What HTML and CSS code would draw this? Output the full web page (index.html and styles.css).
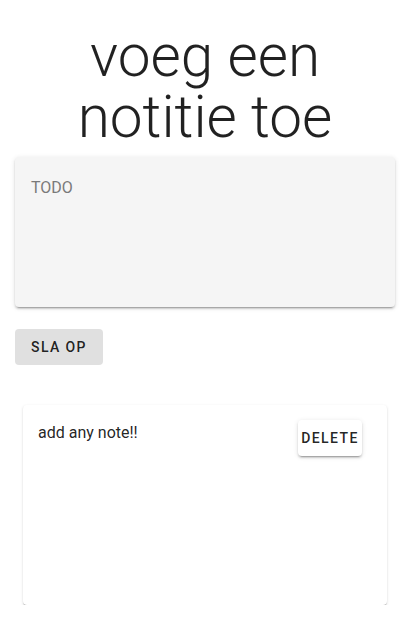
FILE: index.html
```html
<!DOCTYPE html>
<html lang="nl">
<head>
<meta charset="utf-8">
<title>voeg een notitie toe</title>
<link rel="stylesheet" href="styles.css">
</head>
<body>
<main class="page">
  <h1 class="title">voeg een notitie toe</h1>
  <div class="paper input-paper">
    <textarea class="todo-input" placeholder="TODO"></textarea>
  </div>
  <button class="btn btn-save" type="button">Sla op</button>
  <section class="notes">
    <article class="note-card">
      <p class="note-text">add any note!!</p>
      <button class="btn btn-delete" type="button">Delete</button>
    </article>
  </section>
</main>
</body>
</html>
```

FILE: styles.css
```css
* { box-sizing: border-box; }

html, body {
  margin: 0;
  padding: 0;
  background: #ffffff;
}

body {
  font-family: Roboto, "Liberation Sans", sans-serif;
  color: rgba(0, 0, 0, 0.87);
}

.page {
  padding: 26px 16px 0 15px;
  display: flex;
  flex-direction: column;
}

.title {
  margin: 0 auto;
  max-width: 270px;
  font-size: 58.5px;
  font-weight: 300;
  line-height: 61px;
  text-align: center;
  color: rgba(0, 0, 0, 0.87);
}

.paper {
  border-radius: 4px;
  box-shadow: 0px 3px 1px -2px rgba(0,0,0,0.2), 0px 2px 2px 0px rgba(0,0,0,0.14), 0px 1px 5px 0px rgba(0,0,0,0.12);
}

.input-paper {
  margin-top: 9px;
  height: 150px;
  background: #f5f5f5;
  display: flex;
}

.todo-input {
  flex: 1;
  border: none;
  outline: none;
  resize: none;
  background: transparent;
  padding: 21px 16px;
  font-family: Roboto, "Liberation Sans", sans-serif;
  font-size: 16px;
  line-height: 19px;
  color: rgba(0, 0, 0, 0.87);
}

.todo-input::placeholder {
  color: #7a7a7a;
  opacity: 1;
}

.btn {
  font-family: Roboto, "Liberation Sans", sans-serif;
  font-size: 14px;
  font-weight: 500;
  letter-spacing: 0.1em;
  text-transform: uppercase;
  color: rgba(0, 0, 0, 0.87);
  border: none;
  border-radius: 4px;
  height: 36px;
  min-width: 64px;
  cursor: pointer;
  display: inline-flex;
  align-items: center;
  justify-content: center;
}

.btn-save {
  align-self: flex-start;
  margin-top: 22px;
  width: 88px;
  padding: 0 16px;
  background: #e0e0e0;
}

.notes {
  margin-top: 40px;
  padding: 0 8px;
}

.note-card {
  height: 200px;
  background: #ffffff;
  border-radius: 4px;
  box-shadow: 0px 2px 1px -1px rgba(0,0,0,0.2), 0px 1px 1px 0px rgba(0,0,0,0.14), 0px 1px 3px 0px rgba(0,0,0,0.12);
  padding: 15px 25px 15px 15px;
  display: flex;
  justify-content: space-between;
  align-items: flex-start;
}

.note-text {
  margin: 1px 0 0;
  font-size: 16px;
  line-height: 24px;
}

.btn-delete {
  width: 64px;
  padding: 0;
  background: #ffffff;
  box-shadow: 0px 3px 1px -2px rgba(0,0,0,0.2), 0px 2px 2px 0px rgba(0,0,0,0.14), 0px 1px 5px 0px rgba(0,0,0,0.12);
}
```
